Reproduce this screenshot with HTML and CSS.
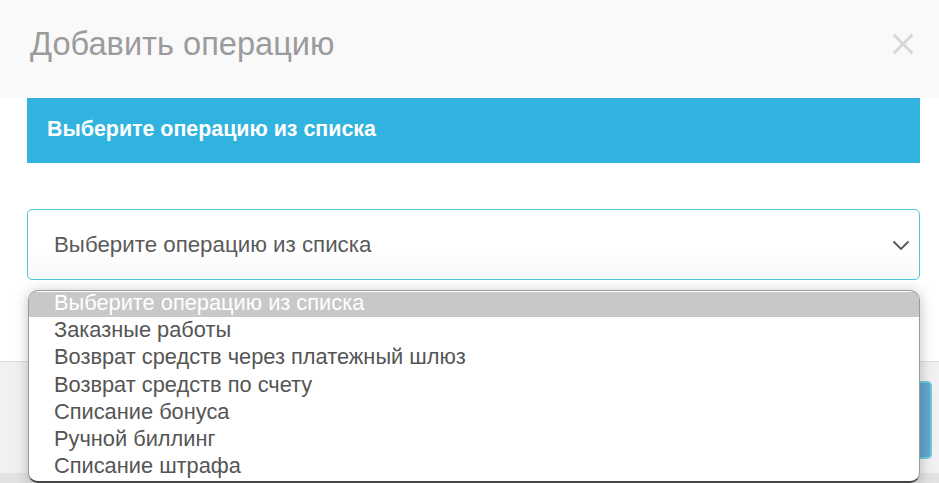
FILE: index.html
```html
<!DOCTYPE html>
<html lang="ru">
<head>
<meta charset="utf-8">
<title>Добавить операцию</title>
<link rel="stylesheet" href="styles.css">
</head>
<body>
<div class="modal">
  <div class="modal-header">
    <h1 class="modal-title">Добавить операцию</h1>
    <span class="close">
      <svg width="22" height="22" viewBox="0 0 22 22"><path d="M1.5 1.5 L20.5 20.5 M20.5 1.5 L1.5 20.5" stroke="#d6d6d6" stroke-width="2.6" fill="none"/></svg>
    </span>
  </div>
  <div class="modal-body">
    <div class="banner">Выберите операцию из списка</div>
    <div class="select-wrap">
      <div class="select">
        <span class="select-value">Выберите операцию из списка</span>
        <svg class="chevron" width="18" height="11" viewBox="0 0 18 11"><path d="M1.5 1.5 L9 9 L16.5 1.5" stroke="#555" stroke-width="1.8" fill="none"/></svg>
      </div>
      <ul class="dropdown">
        <li class="option selected">Выберите операцию из списка</li>
        <li class="option">Заказные работы</li>
        <li class="option">Возврат средств через платежный шлюз</li>
        <li class="option">Возврат средств по счету</li>
        <li class="option">Списание бонуса</li>
        <li class="option">Ручной биллинг</li>
        <li class="option">Списание штрафа</li>
      </ul>
    </div>
  </div>
  <div class="modal-footer">
    <button class="btn-primary">Добавить</button>
  </div>
  <div class="bottom-strip"><span class="bottom-text">Закрыть окно</span></div>
</div>
</body>
</html>
```
FILE: styles.css
```css
* { box-sizing: border-box; }
html, body { margin: 0; padding: 0; }
body {
  font-family: "Liberation Sans", Arial, sans-serif;
  background: #ffffff;
  width: 939px;
  height: 483px;
  overflow: hidden;
}
.modal { display: flex; flex-direction: column; height: 483px; }
.modal-header {
  height: 98px;
  background: #f9f9f9;
  display: flex;
  align-items: center;
  justify-content: space-between;
  padding: 0 25px 0 30px;
}
.modal-title {
  margin: 0;
  font-weight: normal;
  font-size: 32.6px;
  color: #9b9b9b;
  position: relative;
  top: -5px;
}
.close { display: flex; position: relative; top: -5px; }
.modal-body {
  padding: 0 19px 0 27px;
  height: 263px;
  background: #fff;
}
.banner {
  height: 65px;
  background: #31b3df;
  color: #fff;
  font-size: 21.4px;
  font-weight: bold;
  display: flex;
  align-items: center;
  padding-left: 20px;
  padding-bottom: 2px;
}
.select-wrap { position: relative; margin-top: 46px; }
.select {
  height: 71px;
  border: 1px solid #4fc6dc;
  border-radius: 5px;
  display: flex;
  align-items: center;
  justify-content: space-between;
  padding: 0 9px 0 26px;
  font-size: 22.3px;
  color: #5a5a5a;
  background: linear-gradient(#fff 60%, #f7f7f7);
}
.chevron { margin-top: 2px; }
.dropdown {
  position: absolute;
  left: 1px;
  right: 0;
  top: 81px;
  margin: 0;
  padding: 1px 0 0;
  list-style: none;
  background: #fff;
  border: 1px solid #9a9a9a;
  border-bottom: 2px solid #444;
  border-radius: 10px;
  overflow: hidden;
  box-shadow: 0 2px 14px rgba(0,0,0,0.25);
  z-index: 5;
}
.option {
  height: 27.3px;
  line-height: 26px;
  padding-left: 25px;
  font-size: 21.8px;
  color: #555;
  white-space: nowrap;
}
.option.selected { background: #c8c8c8; color: #fff; height: 25px; line-height: 22px; margin-bottom: 0; }
.modal-footer {
  height: 112px;
  background: #f1f1f1;
  border-top: 1px solid #dedede;
  display: flex;
  justify-content: flex-end;
  align-items: flex-start;
  padding: 19px 7px 0 0;
}
.btn-primary {
  width: 180px;
  height: 78px;
  background: #68a6d0;
  border: 2px solid #6ccad6;
  border-radius: 5px;
  color: #fff;
  font-family: "Liberation Sans", Arial, sans-serif;
  font-size: 18px;
}
.bottom-strip {
  flex: 1;
  background: #e2e2e2;
  overflow: hidden;
  display: flex;
  justify-content: flex-end;
  padding-right: 40px;
}
.bottom-text {
  font-size: 20px;
  color: #444;
  line-height: 20px;
  margin-top: 5px;
}
```
